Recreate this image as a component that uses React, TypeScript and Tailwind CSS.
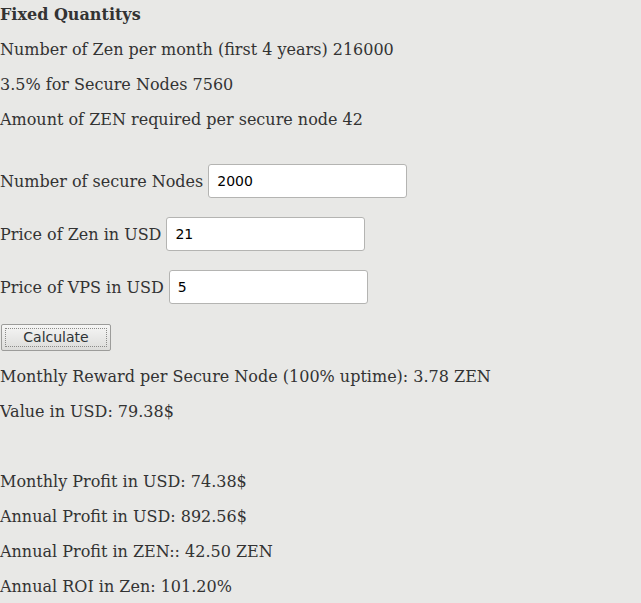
import { useState } from "react";

const fixedLines = [
  "Number of Zen per month (first 4 years) 216000",
  "3.5% for Secure Nodes 7560",
  "Amount of ZEN required per secure node 42",
];

const App = () => {
  const [nodes, setNodes] = useState("2000");
  const [zenPrice, setZenPrice] = useState("21");
  const [vpsPrice, setVpsPrice] = useState("5");

  const inputs = [
    { label: "Number of secure Nodes", value: nodes, set: setNodes },
    { label: "Price of Zen in USD", value: zenPrice, set: setZenPrice },
    { label: "Price of VPS in USD", value: vpsPrice, set: setVpsPrice },
  ];

  return (
    <div className="min-h-screen bg-[#e8e8e6] font-['DejaVu_Serif',serif] text-[16px] leading-[19px] text-[#333333]">
      <div className="flex flex-col pt-[5px]">
        {/* Fixed values */}
        <div className="flex flex-col gap-4">
          <p className="font-bold">Fixed Quantitys</p>
          {fixedLines.map((line) => (
            <p key={line}>{line}</p>
          ))}
        </div>

        {/* Inputs */}
        <div className="mt-[35px] flex flex-col gap-[19px]">
          {inputs.map((item) => (
            <div key={item.label} className="flex items-center gap-[5px]">
              <span>{item.label}</span>
              <input
                type="text"
                value={item.value}
                onChange={(e) => item.set(e.target.value)}
                className="h-[34px] w-[199px] rounded-[3px] border border-[#b4b4b2] bg-white px-[8px] font-['DejaVu_Sans',sans-serif] text-[14px] text-black outline-none"
              />
            </div>
          ))}
        </div>

        <div className="mt-[20px]">
          <button className="ml-[1px] flex h-[27px] w-[110px] items-center justify-center rounded-[2px] border border-[#9c9c9a] bg-gradient-to-b from-[#f6f6f5] to-[#dcdcda] p-[3px] font-['DejaVu_Sans',sans-serif] text-[14px] text-[#2e3436]">
            <span className="flex h-full w-full items-center justify-center border border-dotted border-[#8a8a88]">
              Calculate
            </span>
          </button>
        </div>

        {/* Results */}
        <div className="mt-[16px] flex flex-col gap-4">
          <p>Monthly Reward per Secure Node (100% uptime): 3.78 ZEN</p>
          <p>Value in USD: 79.38$</p>
          <p className="h-[19px]"></p>
          <p>Monthly Profit in USD: 74.38$</p>
          <p>Annual Profit in USD: 892.56$</p>
          <p>Annual Profit in ZEN:: 42.50 ZEN</p>
          <p>Annual ROI in Zen: 101.20%</p>
        </div>
      </div>
    </div>
  );
};

export default App;
